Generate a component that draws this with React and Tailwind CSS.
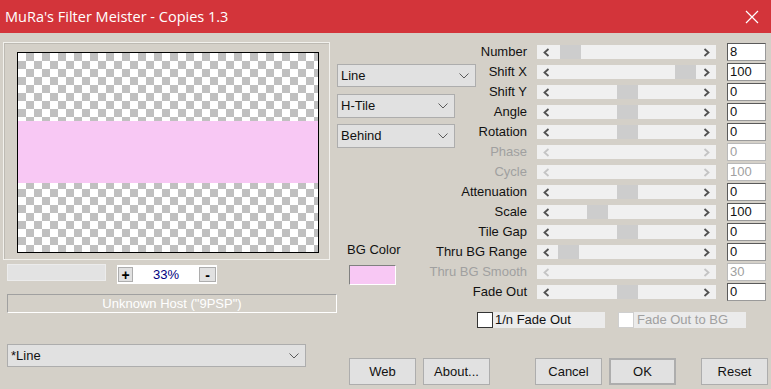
import React from 'react';

const sliders = [
  { label: 'Number', value: '8', pos: 23 },
  { label: 'Shift X', value: '100', pos: 138 },
  { label: 'Shift Y', value: '0', pos: 80 },
  { label: 'Angle', value: '0', pos: 80 },
  { label: 'Rotation', value: '0', pos: 80 },
  { label: 'Phase', value: '0', disabled: true },
  { label: 'Cycle', value: '100', disabled: true },
  { label: 'Attenuation', value: '0', pos: 80 },
  { label: 'Scale', value: '100', pos: 50 },
  { label: 'Tile Gap', value: '0', pos: 80 },
  { label: 'Thru BG Range', value: '0', pos: 21 },
  { label: 'Thru BG Smooth', value: '30', disabled: true },
  { label: 'Fade Out', value: '0', pos: 80 },
];

const Chevron = ({ dir, disabled }) => (
  <svg width="7" height="9" viewBox="0 0 7 9">
    <polyline
      points={dir === 'left' ? '5.5,1 1.5,4.5 5.5,8' : '1.5,1 5.5,4.5 1.5,8'}
      fill="none"
      stroke={disabled ? '#c4c4c4' : '#505050'}
      strokeWidth="1.8"
    />
  </svg>
);

const DropChevron = () => (
  <svg width="10" height="6" viewBox="0 0 10 6">
    <polyline points="0.5,0.5 5,5 9.5,0.5" fill="none" stroke="#5a5a5a" strokeWidth="1" />
  </svg>
);

const Dropdown = ({ text, className }) => (
  <div className={`flex items-center justify-between bg-[#e1e1e1] border border-[#adadad] pl-[3px] pr-[6px] text-[13px] text-[#111] ${className}`}>
    <span>{text}</span>
    <DropChevron />
  </div>
);

const Button = ({ children, className = '' }) => (
  <div className={`w-[67px] h-[27px] flex items-center justify-center bg-[#e1e1e1] border border-[#adadad] text-[13px] text-[#111] ${className}`}>
    {children}
  </div>
);

const SliderRow = ({ s }) => (
  <div className="h-[20px] flex items-center">
    <div className={`w-[50px] flex justify-end whitespace-nowrap text-[13px] ${s.disabled ? 'text-[#a0a0a0]' : 'text-[#111]'}`}>
      {s.label}
    </div>
    <div className="relative ml-[10px] w-[179px] h-[14px] bg-[#f0f0f0] flex items-center justify-between px-[6px]">
      {!s.disabled && (
        <div className="absolute top-0 h-[14px] w-[21px] bg-[#cdcdcd]" style={{ left: s.pos }} />
      )}
      <Chevron dir="left" disabled={s.disabled} />
      <Chevron dir="right" disabled={s.disabled} />
    </div>
    <div
      className={`ml-[11px] w-[39px] h-[18px] bg-white border pl-[2px] text-[13px] leading-[16px] ${
        s.disabled
          ? 'border-[#b8b8b8] text-[#a0a0a0]'
          : 'border-t-[#5a5a5a] border-l-[#5a5a5a] border-r-[#9a9a9a] border-b-[#9a9a9a] text-[#111]'
      }`}
    >
      {s.value}
    </div>
  </div>
);

export default function App() {
  return (
    <div className="w-[771px] h-[389px] overflow-hidden bg-[#d4d0c8] flex flex-col font-['Liberation_Sans',Arial,sans-serif]">
      {/* title bar */}
      <div className="h-[33px] shrink-0 bg-[#d3343a] flex items-center justify-between pl-[5px] pr-[12px]">
        <span className="text-white text-[14.5px] font-['Open_Sans','Noto_Sans',sans-serif]">MuRa's Filter Meister - Copies 1.3</span>
        <svg width="14" height="14" viewBox="0 0 14 14">
          <path d="M1 1 L13 13 M13 1 L1 13" stroke="#fff" strokeWidth="1.2" />
        </svg>
      </div>

      <div className="flex flex-1">
        {/* left column */}
        <div className="w-[337px] flex flex-col">
          <div className="ml-[3px] mt-[9px] w-[327px] h-[218px] border border-[#f2f1ed] shadow-[inset_1px_1px_0_#bdbab3] pl-[13px] pt-[9px]">
            <div className="w-[302px] h-[201px] border border-black bg-[conic-gradient(#c0c0c0_25%,#fff_0_50%,#c0c0c0_0_75%,#fff_0)] bg-[length:16px_16px]">
              <div className="mt-[68px] h-[62px] bg-[#f8c8f4]" />
            </div>
          </div>

          <div className="mt-[4px] flex items-start">
            <div className="ml-[7px] w-[99px] h-[17px] bg-[#e3e3e3] border border-[#ececec]" />
            <div className="ml-[11px] mt-[1px] w-[100px] h-[19px] bg-white flex items-center px-[1px]">
              <div className="w-[15px] h-[15px] bg-[#e1e1e1] border border-[#adadad] flex items-center justify-center text-[14px] font-bold leading-none">+</div>
              <div className="flex-1 text-center text-[13px] text-[#000080]">33%</div>
              <div className="w-[17px] h-[15px] bg-[#e1e1e1] border border-[#adadad] flex items-center justify-center text-[14px] font-bold leading-none">-</div>
            </div>
          </div>

          <div className="ml-[7px] mt-[10px] w-[330px] h-[19px] border border-t-[#a0a0a0] border-l-[#a0a0a0] border-r-white border-b-white flex items-center justify-center text-[13px] text-white">
            Unknown Host ("9PSP")
          </div>

          <Dropdown text="*Line" className="ml-[7px] mt-[31px] w-[299px] h-[23px]" />
        </div>

        {/* right area */}
        <div className="flex-1 flex flex-col">
          <div className="flex">
            <div className="w-[140px] flex flex-col">
              <Dropdown text="Line" className="mt-[31px] w-[139px] h-[23px]" />
              <Dropdown text="H-Tile" className="mt-[7px] w-[118px] h-[24px]" />
              <Dropdown text="Behind" className="mt-[6px] w-[118px] h-[24px]" />
              <div className="ml-[10px] mt-[92px] text-[13px] text-[#111]">BG Color</div>
              <div className="ml-[12px] mt-[5px] w-[47px] h-[20px] bg-[#f8c8f4] border border-t-[#808080] border-l-[#808080] border-r-white border-b-white" />
            </div>
            <div className="flex flex-col pt-[9px]">
              {sliders.map((s) => (
                <SliderRow key={s.label} s={s} />
              ))}
            </div>
          </div>

          <div className="mt-[10px] pl-[140px] flex items-center text-[13px]">
            <div className="w-[16px] h-[16px] bg-white border border-[#333]" />
            <div className="w-[112px] h-[16px] bg-[#ebebeb] pl-[2px] leading-[16px] text-[#111]">1/n Fade Out</div>
            <div className="ml-[13px] w-[16px] h-[16px] bg-white border border-[#cfcfcf]" />
            <div className="w-[112px] h-[16px] bg-[#ebebeb] pl-[3px] leading-[16px] text-[#a0a0a0]">Fade Out to BG</div>
          </div>

          <div className="mt-[30px] flex">
            <Button className="ml-[12px]">Web</Button>
            <Button className="ml-[7px]">About...</Button>
            <Button className="ml-[45px]">Cancel</Button>
            <Button className="ml-[7px] border-2 border-[#0078d7]">OK</Button>
            <Button className="ml-[25px]">Reset</Button>
          </div>
        </div>
      </div>
    </div>
  );
}
